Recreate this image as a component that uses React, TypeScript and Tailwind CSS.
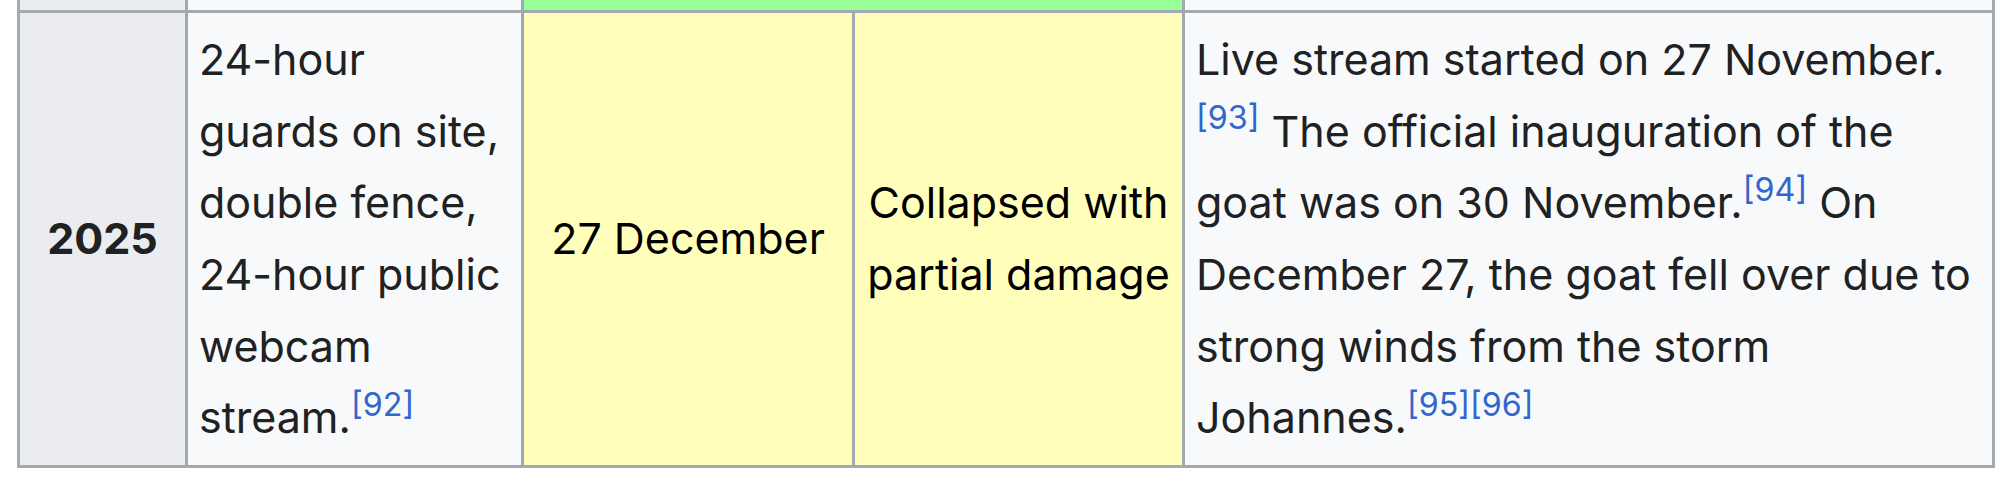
import React from 'react';

function Ref({ n }: { n: number }) {
  return <sup className="relative -top-[0.55em] align-baseline text-[0.75em] leading-none text-[#3366cc]">[{n}]</sup>;
}

export default function App() {
  return (
    <div className="h-[481px] w-[2000px] bg-white font-['Inter',sans-serif] text-[43px] leading-[71.68px] text-[#202122]">
      <div className="ml-[17px] grid w-[1978px] grid-cols-[165px_333px_328px_327px_807px] grid-rows-[10px_452px] gap-[3px] border-x-[3px] border-b-[3px] border-[#a2a9b1] bg-[#a2a9b1]">
        {/* tail of the row above */}
        <div className="bg-[#eaecf0]" />
        <div className="bg-[#f8f9fa]" />
        <div className="col-span-2 bg-[#99ff99]" />
        <div className="bg-[#f8f9fa]" />

        {/* 2025 row */}
        <div className="flex items-center justify-center bg-[#eaecf0] px-[10px] font-bold">2025</div>
        <div className="flex items-center bg-[#f8f9fa] px-[11px] whitespace-nowrap">
          <p>
            24-hour
            <br />
            guards on site,
            <br />
            double fence,
            <br />
            24-hour public
            <br />
            webcam
            <br />
            stream.<Ref n={92} />
          </p>
        </div>
        <div className="flex items-center justify-center bg-[#ffffbb] px-[10px] text-black whitespace-nowrap">
          27 December
        </div>
        <div className="flex items-center justify-center bg-[#ffffbb] px-[10px] text-center text-black whitespace-nowrap">
          <p>
            Collapsed with
            <br />
            partial damage
          </p>
        </div>
        <div className="flex items-center bg-[#f8f9fa] px-[11px] whitespace-nowrap">
          <p>
            Live stream started on 27 November.
            <br />
            <Ref n={93} /> The official inauguration of the
            <br />
            goat was on 30 November.<Ref n={94} /> On
            <br />
            December 27, the goat fell over due to
            <br />
            strong winds from the storm
            <br />
            Johannes.<Ref n={95} />
            <Ref n={96} />
          </p>
        </div>
      </div>
    </div>
  );
}
